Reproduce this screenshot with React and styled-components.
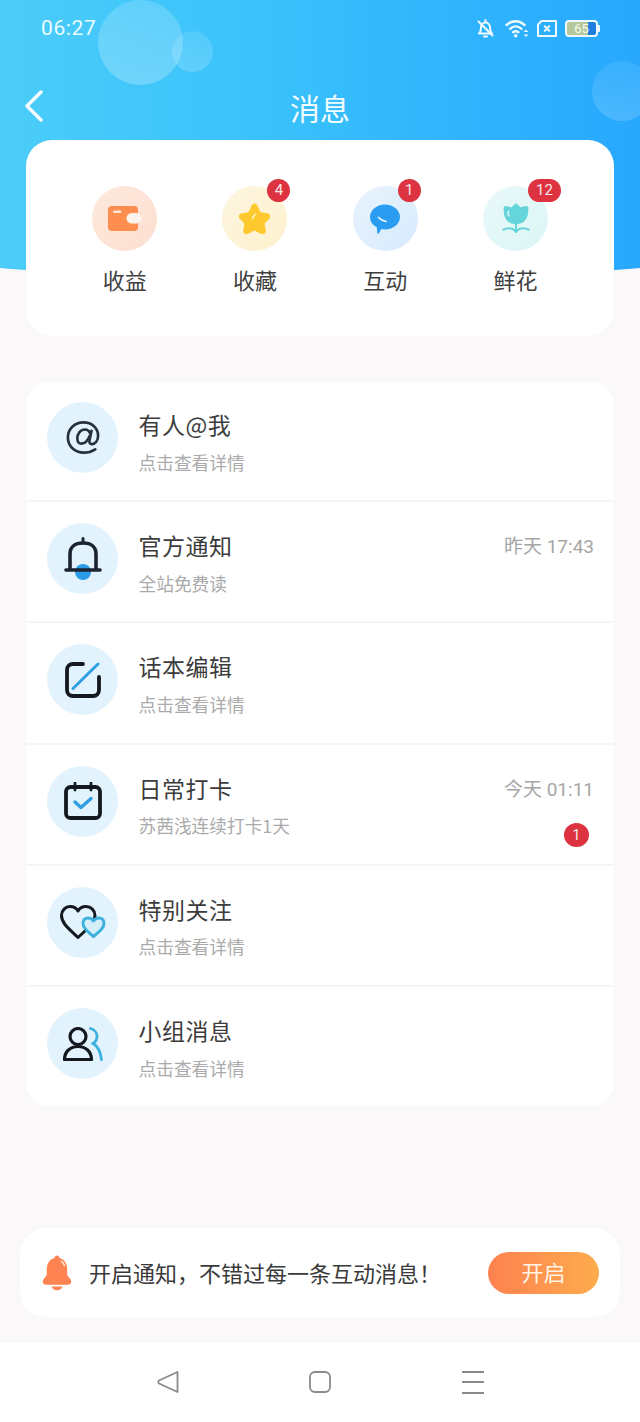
import React from 'react'
import styled, { createGlobalStyle } from 'styled-components'

const Global = createGlobalStyle`
  html, body {
    margin: 0;
    padding: 0;
    background: #faf8f9;
  }
  * { box-sizing: border-box; }
`

const Page = styled.div`
  position: relative;
  width: 640px;
  height: 1422px;
  overflow: hidden;
  background: #faf8f9;
  display: flex;
  flex-direction: column;
  font-family: "Noto Sans CJK SC", "Noto Sans", sans-serif;
  color: #333;
`

// blue backdrop behind the status bar and the top card
const Backdrop = styled.div`
  position: absolute;
  left: 0;
  top: 0;
  width: 640px;
  height: 285px;
  overflow: hidden;
  background: linear-gradient(90deg, #4ccdf9 0%, #3ac2fb 40%, #27a8fe 100%);
  clip-path: ellipse(1062px 281px at 320px 0);
`

const Bubble = styled.div`
  position: absolute;
  left: ${p => p.x}px;
  top: ${p => p.y}px;
  width: ${p => p.size}px;
  height: ${p => p.size}px;
  border-radius: 50%;
  background: linear-gradient(180deg, rgba(255,255,255,${p => p.alpha}), rgba(255,255,255,${p => p.alpha + 0.08}));
`

const StatusBar = styled.div`
  position: relative;
  height: 56px;
  display: flex;
  align-items: center;
  justify-content: space-between;
  padding: 0 40px 0 41px;
`

const Clock = styled.span`
  font-family: Roboto, sans-serif;
  font-size: 21px;
  color: #e8fbff;
  letter-spacing: .6px;
`

const StatusIcons = styled.div`
  display: flex;
  align-items: center;
  gap: 8px;
  & > svg:first-child { margin-right: 3px; }
`

const Battery = styled.div`
  position: relative;
  width: 33px;
  height: 17px;
  border: 2px solid #eef9ff;
  border-radius: 4px;
  overflow: hidden;
  background: linear-gradient(90deg, #b5c79b 0 74%, #1f7fe0 74%);
  font-family: Roboto, sans-serif;
  font-size: 13px;
  line-height: 13px;
  text-align: center;
  color: #f7fbee;
`

const BatteryWrap = styled.div`
  display: flex;
  align-items: center;
  &::after {
    content: "";
    width: 2px;
    height: 7px;
    background: #eef9ff;
    border-radius: 0 1px 1px 0;
  }
`

const NavBar = styled.div`
  position: relative;
  height: 84px;
  display: flex;
  align-items: center;
  justify-content: center;
  padding-top: 17px;
`

const Back = styled.svg`
  position: absolute;
  left: 24px;
  top: 34px;
`

const Title = styled.h1`
  margin: 0;
  font-size: 30px;
  font-weight: 400;
  color: #f2fcff;
  line-height: 40px;
`

const TopCard = styled.div`
  position: relative;
  margin: 0 26px;
  height: 196px;
  background: #fff;
  border-radius: 26px;
  display: grid;
  grid-template-columns: repeat(4, 130.3px);
  padding: 46px 0 0 33.5px;
`

const Shortcut = styled.div`
  display: flex;
  flex-direction: column;
  align-items: center;
  gap: 12px;
`

const ShortcutIcon = styled.div`
  position: relative;
  width: 65px;
  height: 65px;
  border-radius: 50%;
  background: ${p => p.bg};
  display: flex;
  align-items: center;
  justify-content: center;
`

const ShortcutLabel = styled.span`
  font-size: 22px;
  line-height: 32px;
  color: #3f3f3f;
`

const Badge = styled.span`
  position: absolute;
  top: -7px;
  left: 45px;
  min-width: 23px;
  height: 23px;
  padding: 0 ${p => (p.wide ? 8 : 0)}px;
  border-radius: 12px;
  background: #dd3340;
  color: #f6e9ea;
  font-family: Roboto, sans-serif;
  font-size: 15px;
  line-height: 23px;
  text-align: center;
`

const List = styled.div`
  margin: 46px 26px 0;
  background: #fff;
  border-radius: 24px;
  height: 724px;
  display: flex;
  flex-direction: column;
`

const Row = styled.div`
  position: relative;
  flex: none;
  height: 121.3px;
  display: flex;
  align-items: flex-start;
  padding: 21px 20px 0 21px;
  border-bottom: 2px solid #f5f5f5;
  &:first-child {
    height: 120px;
    padding-top: 20px;
  }
  &:last-child {
    height: 118.8px;
    border-bottom: 0;
  }
`

const RowIcon = styled.div`
  width: 71px;
  height: 71px;
  border-radius: 50%;
  background: #e3f3fd;
  display: flex;
  align-items: center;
  justify-content: center;
  flex: none;
`

const RowText = styled.div`
  margin-left: 20.5px;
  flex: 1;
  display: flex;
  flex-direction: column;
`

const RowTitle = styled.span`
  font-size: 23px;
  line-height: 34px;
  margin-top: 5px;
  color: #3c3c3c;
  letter-spacing: .5px;
`

const RowSub = styled.span`
  font-size: 17.7px;
  line-height: 26px;
  margin-top: 7.5px;
  color: #aaa;
`

const RowMeta = styled.span`
  margin-top: 11px;
  font-family: Roboto, "Noto Sans CJK SC", sans-serif;
  font-size: 19px;
  line-height: 26px;
  color: #a6a6a6;
`

const RowBadge = styled.span`
  position: absolute;
  right: 25px;
  top: 78px;
  width: 25px;
  height: 24px;
  border-radius: 50%;
  background: #dd3340;
  color: #f6e9ea;
  font-family: Roboto, sans-serif;
  font-size: 14px;
  line-height: 24px;
  text-align: center;
`

const Banner = styled.div`
  position: relative;
  margin: 122px 20px 0;
  height: 89px;
  background: #fff;
  border-radius: 26px;
  display: flex;
  align-items: center;
  padding: 0 21px 0 21px;
`

const BannerText = styled.span`
  margin: 0 0 2px 16px;
  flex: 1;
  font-size: 22px;
  line-height: 32px;
  color: #3a3a3a;
  white-space: nowrap;
`

const OpenButton = styled.button`
  flex: none;
  width: 111px;
  height: 42px;
  border: 0;
  border-radius: 21px;
  background: linear-gradient(90deg, #fd8150, #feac4d);
  color: #fff3e4;
  font: inherit;
  font-size: 22px;
  line-height: 38px;
  padding: 0 0 4px;
`

const SystemNav = styled.div`
  position: absolute;
  left: 0;
  right: 0;
  bottom: 0;
  height: 79px;
  background: #fff;
  display: flex;
  align-items: center;
  justify-content: center;
  gap: 130.5px;
  padding-bottom: 1px;
`

const WalletIcon = () => (
  <svg width="34" height="26" viewBox="0 0 34 26">
    <rect x="0" y="0" width="30" height="25" rx="4" fill="#fd8e4f" />
    <rect x="18.500" y="7" width="15" height="10.500" rx="5.200" fill="#fdf3ec" />
    <rect x="5" y="4.500" width="8.500" height="2.500" rx="1.200" fill="#fde5d6" />
  </svg>
)

const StarIcon = () => (
  <svg width="31" height="31" viewBox="3 1.500 26 26.500">
    <path d="M16 2c1.400 0 2.200 1 2.900 2.500l2.300 5 5.600.8c2.600.4 3.600 2.800 1.800 4.700l-4 4.100 1 5.700c.4 2.700-1.800 4.300-4.200 3L16 25.100l-5.400 2.700c-2.400 1.300-4.600-.3-4.200-3l1-5.700-4-4.100c-1.800-1.900-.8-4.300 1.800-4.700l5.600-.8 2.300-5C13.800 3 14.600 2 16 2z" fill="#fdc92f" />
    <path d="M14.500 15c.2-2 1-3.200 2.500-4" stroke="#fff4cf" strokeWidth="1.100" fill="none" strokeLinecap="round" />
  </svg>
)

const ChatIcon = () => (
  <svg width="32" height="32" viewBox="0 0 32 31">
    <path d="M16 1c8.300 0 15 5.600 15 12.500S24.300 26 16 26c-1.300 0-2.500-.1-3.700-.4L10 29.800c-.5.800-1.600.5-1.700-.4l-.5-5.700C3.500 21.500 1 17.800 1 13.500 1 6.600 7.700 1 16 1z" fill="#2a9df2" />
    <path d="M9.500 14c2 2.200 4.500 3.500 7.500 4" stroke="#eef8ff" strokeWidth="1.700" fill="none" strokeLinecap="round" />
  </svg>
)

const FlowerIcon = () => (
  <svg width="28" height="31" viewBox="0 0 30 32">
    <path d="M15 0c2 1 3.600 2.500 4.600 4.200C21.500 3.200 24.500 2.700 28 3c1 9-1.500 19-13 19S1 12 2 3c3.500-.3 6.500.2 8.400 1.200C11.400 2.500 13 1 15 0z" fill="#64d5da" />
    <path d="M7 8c-.8 2-.6 3.800.6 5.200" stroke="#e6fafa" strokeWidth="1.500" fill="none" strokeLinecap="round" />
    <path d="M15 21v9.500M1.500 28c5.500-2.500 10.500-1.500 13.500 2.500M28.500 28c-5.500-2.500-10.500-1.500-13.500 2.500" stroke="#64d5da" strokeWidth="2.200" fill="none" strokeLinecap="round" />
  </svg>
)

const AtIcon = () => (
  <svg width="34" height="33" viewBox="0 0 36 34" fill="none" stroke="#263041" strokeWidth="2.800" strokeLinecap="round">
    <path d="M31 29.500C27.500 31.800 24 33 19 33 9 33 2 26 2 17 2 8 9 1 18.500 1 27.500 1 34 7 34 15c0 5.500-3 9-6.500 9-2.200 0-3.200-1.500-2.600-4l2.100-10" />
    <path d="M25.500 12.500C24.500 9.800 22.500 8.500 20 8.500c-4.500 0-8 4.500-8 9.500 0 3.500 1.800 5.500 4.500 5.500 3.500 0 6.500-3 8.500-8" />
  </svg>
)

const BellIcon = () => (
  <svg width="38" height="43" viewBox="0 0 38 43">
    <circle cx="19" cy="35" r="8" fill="#2a9be6" />
    <path d="M6 33V17C6 10 11 6 19 6s13 4 13 11v16" fill="none" stroke="#1c2433" strokeWidth="3.600" />
    <path d="M19 1.500v4" stroke="#1c2433" strokeWidth="3" strokeLinecap="round" />
    <path d="M2 33h34" stroke="#1c2433" strokeWidth="3.600" strokeLinecap="round" />
  </svg>
)

const EditIcon = () => (
  <svg width="36" height="36" viewBox="0 0 36 36" fill="none" strokeLinecap="round">
    <path d="M18 2H8C4.500 2 2 4.500 2 8v20c0 3.500 2.500 6 6 6h20c3.500 0 6-2.500 6-6V15" stroke="#14181f" strokeWidth="3.800" />
    <path d="M8 26.500L33 2" stroke="#2f9fe3" strokeWidth="3" />
  </svg>
)

const CalendarIcon = () => (
  <svg width="38" height="38" viewBox="0 0 38 38" fill="none">
    <rect x="2" y="5" width="34" height="31" rx="4.500" stroke="#14181f" strokeWidth="3.800" />
    <path d="M11 1v7M27 1v7" stroke="#14181f" strokeWidth="2.800" strokeLinecap="round" />
    <path d="M11 20l6 5.500 10-9" stroke="#2f9fe3" strokeWidth="3.400" strokeLinecap="round" strokeLinejoin="round" />
  </svg>
)

const HeartsIcon = () => (
  <svg width="46" height="34" viewBox="0 0 46 34" fill="none">
    <path d="M18 32.500C8 23 1.500 18 1.500 10.500 1.500 5.500 5.500 1.500 10 1.500c3.500 0 6.500 1.700 8 4.500 1.500-2.800 4.500-4.500 8-4.500 5 0 9 4 9 9 0 7.500-7.500 13-17 22z" stroke="#14181f" strokeWidth="3" strokeLinejoin="round" />
    <path d="M33.500 31.500C27 26 23 23 23 18c0-3 2.200-5 5-5 2.300 0 4.300 1 5.500 3 1.200-2 3.200-3 5.500-3 2.800 0 5 2 5 5 0 5-4 8-10.500 13.500z" fill="#d4eefa" stroke="#3eb0de" strokeWidth="3" strokeLinejoin="round" />
  </svg>
)

const GroupIcon = () => (
  <svg width="40" height="34" viewBox="0 0 40 34" fill="none">
    <circle cx="15" cy="9.500" r="8" stroke="#14181f" strokeWidth="3.200" />
    <path d="M1.500 32.500c0-8 6-13 13.500-13s13.500 5 13.500 13z" stroke="#14181f" strokeWidth="3.200" strokeLinejoin="round" />
    <path d="M27.500 1.500c4 1 6.500 4.500 6.500 8 0 3-1.500 5.500-4 7 4.500 2.500 7.500 8 8.500 16" stroke="#3eb0de" strokeWidth="2.800" strokeLinecap="round" />
  </svg>
)

const OrangeBell = () => (
  <svg width="32" height="36" viewBox="0 0 33 36">
    <path d="M16.500 0c1.500 0 2.500 1 2.500 2.500 5.500 1.500 8 6 8 12v4.500c0 2 1.500 3 3 5 2 2.500 1.500 6-2 6H5c-3.500 0-4-3.500-2-6 1.500-2 3-3 3-5v-4.500c0-6 2.500-10.500 8-12C14 1 15 0 16.500 0z" fill="#fd8352" />
    <path d="M21 6c1.500 1 2.500 2.500 3.200 4.200" stroke="#ffe3d4" strokeWidth="1.600" strokeLinecap="round" fill="none" />
    <path d="M11 32h11c-.5 2.500-2.500 3.800-5.500 3.800S11.500 34.500 11 32z" fill="#fd8352" />
  </svg>
)

const MutedBell = () => (
  <svg width="17" height="19" viewBox="0 0 17 19" fill="none" stroke="#eef9ff" strokeWidth="2" strokeLinejoin="round">
    <path d="M2 14.500c1.500-1.500 2-3 2-5.500 0-3.200 2-5.500 4.500-5.500S13 5.800 13 9c0 2.500.5 4 2 5.500z" />
    <path d="M8.500 1v2M7 17.500h3M1.500 2.500l14 14" strokeLinecap="round" />
  </svg>
)

const Wifi = () => (
  <svg width="24" height="19" viewBox="0 0 24 19" fill="none" stroke="#eef9ff" strokeWidth="2.400" strokeLinecap="round">
    <path d="M1.500 6c5.500-5 12.500-5 18 0M5 9.800c3.500-3 8-3 11.500 0M8 13.200c1.500-1 3.900-1 5.400 0" />
    <circle cx="10.700" cy="16.800" r="1.800" fill="#eef9ff" stroke="none" />
    <path d="M21 10.500l2.400 2.500h-4.800zM21 18l2.400-2.500h-4.800z" fill="#eef9ff" stroke="none" />
  </svg>
)

const SimOff = () => (
  <svg width="20" height="17" viewBox="0 0 20 17" fill="none">
    <path d="M4.500 1H19v15H1V4.500z" stroke="#eef9ff" strokeWidth="2" strokeLinejoin="round" />
    <path d="M7.800 6.300l4.400 4.400M12.200 6.300l-4.400 4.400" stroke="#eef9ff" strokeWidth="2" strokeLinecap="round" />
  </svg>
)

const shortcuts = [
  { label: '收益', bg: 'linear-gradient(135deg,#fde9dc,#fddfd0)', icon: <WalletIcon /> },
  { label: '收藏', bg: 'linear-gradient(135deg,#fdf5e0,#fef1cd)', icon: <StarIcon />, badge: '4' },
  { label: '互动', bg: 'linear-gradient(135deg,#e9f3fd,#d6eafd)', icon: <ChatIcon />, badge: '1' },
  { label: '鲜花', bg: 'linear-gradient(135deg,#e9f9f9,#dcf5f6)', icon: <FlowerIcon />, badge: '12' },
]

const rows = [
  { title: '有人@我', sub: '点击查看详情', icon: <AtIcon /> },
  { title: '官方通知', sub: '全站免费读', meta: '昨天 17:43', icon: <BellIcon /> },
  { title: '话本编辑', sub: '点击查看详情', icon: <EditIcon /> },
  { title: '日常打卡', sub: '苏茜浅连续打卡1天', meta: '今天 01:11', badge: '1', icon: <CalendarIcon /> },
  { title: '特别关注', sub: '点击查看详情', icon: <HeartsIcon /> },
  { title: '小组消息', sub: '点击查看详情', icon: <GroupIcon /> },
]

export default function App() {
  return (
    <Page>
      <Global />
      <Backdrop>
        <Bubble x={98} y={0} size={85} alpha={0.16} />
        <Bubble x={172} y={31} size={41} alpha={0.1} />
        <Bubble x={592} y={61} size={60} alpha={0.08} />
      </Backdrop>
      <StatusBar>
        <Clock>06:27</Clock>
        <StatusIcons>
          <MutedBell />
          <Wifi />
          <SimOff />
          <BatteryWrap><Battery>65</Battery></BatteryWrap>
        </StatusIcons>
      </StatusBar>
      <NavBar>
        <Back width="20" height="32" viewBox="0 0 20 32" fill="none">
          <path d="M17 2L3 16l14 14" stroke="#f2fcff" strokeWidth="3.500" strokeLinecap="round" strokeLinejoin="round" />
        </Back>
        <Title>消息</Title>
      </NavBar>
      <TopCard>
        {shortcuts.map(s => (
          <Shortcut key={s.label}>
            <ShortcutIcon bg={s.bg}>
              {s.icon}
              {s.badge && <Badge wide={s.badge.length > 1}>{s.badge}</Badge>}
            </ShortcutIcon>
            <ShortcutLabel>{s.label}</ShortcutLabel>
          </Shortcut>
        ))}
      </TopCard>
      <List>
        {rows.map(r => (
          <Row key={r.title}>
            <RowIcon>{r.icon}</RowIcon>
            <RowText>
              <RowTitle>{r.title}</RowTitle>
              <RowSub>{r.sub}</RowSub>
            </RowText>
            {r.meta && <RowMeta>{r.meta}</RowMeta>}
            {r.badge && <RowBadge>{r.badge}</RowBadge>}
          </Row>
        ))}
      </List>
      <Banner>
        <OrangeBell />
        <BannerText>开启通知，不错过每一条互动消息！</BannerText>
        <OpenButton>开启</OpenButton>
      </Banner>
      <SystemNav>
        <svg width="22" height="24" viewBox="0 0 22 24" fill="none" stroke="#8a8a8a" strokeWidth="1.800" strokeLinejoin="round">
          <path d="M20.500 2v20L2 13.500a2 2 0 0 1 0-3z" />
        </svg>
        <svg width="22" height="22" viewBox="0 0 22 22" fill="none" stroke="#8a8a8a" strokeWidth="1.800">
          <rect x="1" y="1" width="20" height="20" rx="5" />
        </svg>
        <svg width="22" height="24" viewBox="0 0 22 24" fill="none" stroke="#8a8a8a" strokeWidth="1.800">
          <path d="M0 2h22M0 12h22M0 23h22" />
        </svg>
      </SystemNav>
    </Page>
  )
}
